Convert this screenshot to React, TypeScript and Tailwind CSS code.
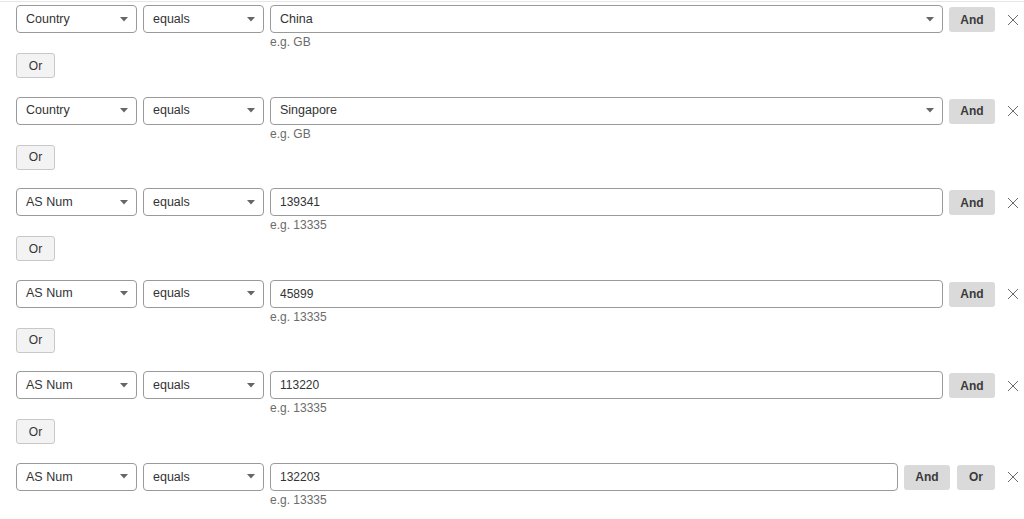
import React from 'react';

type Rule = { field: string; value: string; hint: string; dropdown: boolean };

const rules: Rule[] = [
  { field: 'Country', value: 'China', hint: 'e.g. GB', dropdown: true },
  { field: 'Country', value: 'Singapore', hint: 'e.g. GB', dropdown: true },
  { field: 'AS Num', value: '139341', hint: 'e.g. 13335', dropdown: false },
  { field: 'AS Num', value: '45899', hint: 'e.g. 13335', dropdown: false },
  { field: 'AS Num', value: '113220', hint: 'e.g. 13335', dropdown: false },
  { field: 'AS Num', value: '132203', hint: 'e.g. 13335', dropdown: false },
];

const Caret = () => (
  <svg width="8" height="5" viewBox="0 0 8 5" className="shrink-0">
    <path d="M0 0 L8 0 L4 4.5 Z" fill="#666" />
  </svg>
);

const Select: React.FC<{ label: string }> = ({ label }) => (
  <div className="w-[121px] h-[28px] shrink-0 border border-[#9a9a9a] rounded-[4px] bg-white flex items-center justify-between pl-[9px] pr-[8px]">
    <span className="text-[12.5px] text-[#333]">{label}</span>
    <Caret />
  </div>
);

const GrayBtn: React.FC<{ label: string; w: string }> = ({ label, w }) => (
  <div className={`${w} h-[25px] shrink-0 bg-[#dadada] rounded-[3px] flex items-center justify-center text-[12px] font-semibold text-[#3a3a3a]`}>
    {label}
  </div>
);

const Close = () => (
  <div className="w-[29px] h-[28px] shrink-0 flex items-center justify-end pr-[5px]">
    <svg width="12" height="12" viewBox="0 0 12 12">
      <path d="M1 1 L11 11 M11 1 L1 11" stroke="#6a6a6a" strokeWidth="1" />
    </svg>
  </div>
);

export default function App() {
  return (
    <div className="w-[1024px] h-[519px] bg-white overflow-hidden border-t border-[#e6e6e6] mt-[1px] pt-[3px] pl-[16px]" style={{ fontFamily: '"Liberation Sans", Arial, sans-serif' }}>
      {rules.map((r, i) => {
        const last = i === rules.length - 1;
        return (
          <div key={i} className="h-[91.6px]">
            <div className="flex items-start">
              <Select label={r.field} />
              <div className="ml-[6px]">
                <Select label="equals" />
              </div>
              <div className="ml-[6px] flex-1 min-w-0">
                <div className="h-[28px] border border-[#9a9a9a] rounded-[4px] bg-white flex items-center justify-between pl-[9px] pr-[8px]">
                  <span className={r.dropdown ? 'text-[12.5px] text-[#333]' : 'text-[12px] text-[#333]'}>{r.value}</span>
                  {r.dropdown && <Caret />}
                </div>
                <div className="text-[12px] text-[#6b6b6b] leading-[16px] mt-[1px]">{r.hint}</div>
              </div>
              <div className="flex items-center h-[28px] pt-[1px] ml-[6px]">
                <GrayBtn label="And" w="w-[46px]" />
                {last && (
                  <div className="ml-[7px]">
                    <GrayBtn label="Or" w="w-[38px]" />
                  </div>
                )}
                <Close />
              </div>
            </div>
            {!last && (
              <div className="mt-[3px] w-[39px] h-[25px] bg-[#f3f3f3] border border-[#c8c8c8] rounded-[3px] flex items-center justify-center text-[12px] text-[#333]">
                Or
              </div>
            )}
          </div>
        );
      })}
    </div>
  );
}
